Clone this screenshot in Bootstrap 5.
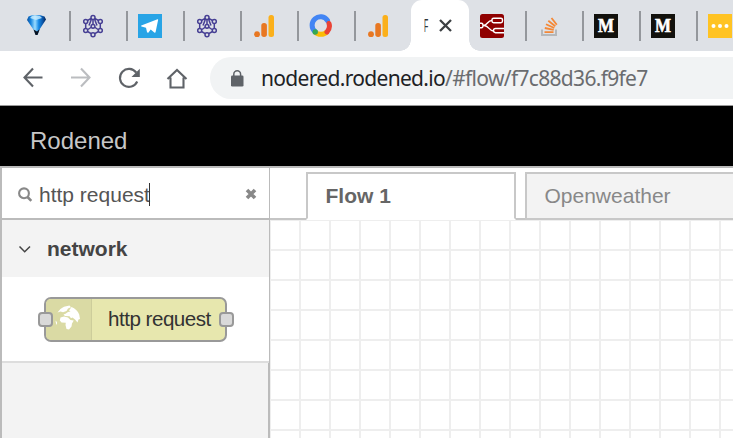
<!DOCTYPE html>
<html lang="en">
<head>
<meta charset="utf-8">
<title>Rodened</title>
<link href="https://cdn.jsdelivr.net/npm/bootstrap@5.3.0/dist/css/bootstrap.min.css" rel="stylesheet">
<style>
html,body{height:100%;overflow:hidden}
body{font-family:"Liberation Sans",Arial,sans-serif;font-size:21px;line-height:30px;color:#555;background:#fff}
svg{display:block;flex:none}
.tabstrip{height:51px;background:#dee1e6;padding-left:24px}
.fav{width:24px;height:24px;flex:none}
.divider{width:2px;height:30px;margin:0 10px 0 21px;background:#94979c;flex:none}
.active-tab{width:58px;height:51px;background:#fff;border-radius:11px 11px 0 0;margin:0 11px 0 21px;padding-left:13px;flex:none}
.active-tab::before,.active-tab::after{content:"";position:absolute;bottom:0;width:11px;height:11px}
.active-tab::before{left:-11px;background:radial-gradient(circle at 0 0,transparent 10.5px,#fff 11px)}
.active-tab::after{right:-11px;background:radial-gradient(circle at 100% 0,transparent 10.5px,#fff 11px)}
.tab-title{width:11px;font-size:17.5px;color:#33373b;line-height:24px;transform:scaleX(.4);transform-origin:0 50%}
.close-tab{margin-right:17px}
.toolbar{height:55px;border-bottom:1px solid #999;padding-left:20px}
.omnibox{height:42px;background:#f1f3f4;border-radius:21px 0 0 21px;margin-left:20px;padding-left:20px}
.url{font-family:"Noto Sans","Open Sans",sans-serif;font-size:21px;letter-spacing:-.68px;color:#6a6c6f;margin-left:16px;padding-bottom:1px}
.url b{font-weight:400;color:#202124}
.app-header{height:60px;background:#000;color:#c7c7c7;font-size:24px;padding:9px 0 0 30px}
.workspace{height:272px;border-top:2px solid #bbb}
.palette{width:270px;border-left:2px solid #bbb;border-right:1px solid #bbb;background:#f3f3f3;flex:none}
.search{height:52px;border-bottom:2px solid #bbb;background:#fff;padding:3px 12px 0 15px}
.caret{width:1px;height:23px;margin-left:-1px;background:#333}
.category{height:57px;color:#444;padding:1px 0 0 16px}
.category-name{margin-left:16px}
.nodes{height:86px;border-bottom:2px solid #ddd;background:#fff;padding:20px 0 0 42px}
.filler{border-right:1px solid #bbb}
.node{width:183px;height:45px;border:2px solid #999;border-radius:7px;background:#e7e7ae;color:#333}
.node-icon{width:46px;background:#dadaa4;border-right:1px solid #cdcd9b;border-radius:5px 0 0 5px;padding-left:8px}
.node-label{font-size:20.6px;letter-spacing:-.5px;margin-left:16px;padding-bottom:1px}
.port{width:15px;height:15px;border:2px solid #999;border-radius:4px;background:#d9d9d9;top:13px}
.port-in{left:-8px}.port-out{right:-9px}
.flow-tabs{height:52px;padding-top:4px;padding-left:36px;background:linear-gradient(#c5c5c5,#c5c5c5) bottom/100% 2px no-repeat}
.flow-tab{width:210px;height:48px;border:2px solid #c8c8c8;padding:0 0 0 17.5px;margin-right:9px;flex:none}
.flow-tab.current{background:#fff;border-bottom-color:#fff;color:#666}
.flow-tab.other{background:#f3f3f3;color:#888}
.grid-canvas{background-color:#fff;background-image:linear-gradient(90deg,#eee 2px,transparent 2px),linear-gradient(#eee 2px,transparent 2px);background-size:30px 30px;background-position:-1px -1px}
</style>
<script src="https://cdn.jsdelivr.net/npm/bootstrap@5.3.0/dist/js/bootstrap.bundle.min.js"></script>
</head>
<body class="d-flex flex-column">
<svg width="0" height="0" class="position-absolute">
<defs>
<linearGradient id="gem"><stop offset="0" stop-color="#0b4f9e"/><stop offset=".2" stop-color="#1685df"/><stop offset=".42" stop-color="#9adcff"/><stop offset=".62" stop-color="#1488e6"/><stop offset=".85" stop-color="#0a4fa0"/><stop offset="1" stop-color="#04224f"/></linearGradient>
<symbol id="graph" viewBox="0 0 24 24"><g fill="none" stroke="#463f94" stroke-width="1.5"><path d="M12 3.300 19.300 7.500V16.500L12 20.700 4.700 16.500V7.500ZM12 4V11M12 12 7 15.500M12 12 17 15.500M10.500 5 8 11.500M13.500 5 16 11.500"/><g fill="#dee1e6"><circle cx="12" cy="3.500" r="2"/><circle cx="19.300" cy="7.500" r="2"/><circle cx="19.300" cy="16.500" r="2"/><circle cx="12" cy="20.700" r="2"/><circle cx="4.700" cy="16.500" r="2"/><circle cx="4.700" cy="7.500" r="2"/><circle cx="12" cy="12.300" r="1.900"/></g></g></symbol>
<symbol id="bars" viewBox="0 0 24 24"><rect x="16.500" y="1" width="5.500" height="22" rx="2.500" fill="#fbb01b"/><rect x="9.300" y="9" width="5.600" height="14" rx="2.700" fill="#e87722"/><circle cx="5" cy="20.200" r="2.900" fill="#e87722"/></symbol>
<symbol id="medium" viewBox="0 0 24 24"><path fill="#12110d" d="M0 0h24v24H0z"/><text x="12" y="17.500" text-anchor="middle" textLength="16" lengthAdjust="spacingAndGlyphs" font-family="Liberation Serif,serif" font-weight="bold" font-size="18" fill="#fff" stroke="#fff" stroke-width=".6">M</text></symbol>
</defs>
</svg>

<div class="tabstrip d-flex align-items-center">
  <svg class="fav" viewBox="0 0 24 24"><path d="M4.500 2.500 8 1.300H16.500L20.500 2.500 22 5.500 15.500 15.500 13.500 21H11.500L10 16.500 3 6Z" fill="url(#gem)"/><path d="M8 2H16L18 4 12 6 6 4Z" fill="#c9eeff" opacity=".8"/><path d="M9.500 15.500 13 17.500 15.800 15 13.500 21H11.500Z" fill="#07101f"/></svg>
  <span class="divider"></span>
  <svg class="fav"><use href="#graph"/></svg><span class="divider"></span>
  <svg class="fav" viewBox="0 0 24 24"><path fill="#28a4e6" d="M0 0h24v24H0z"/><path fill="#fff" d="M3.300 11.500 19.500 5.200C20 5 20.200 5.400 20.100 6L17.600 18C17.400 18.800 16.900 18.800 16.300 18.400L12.700 15.600 10.500 18.500C10 19 9.200 18.700 9 18L8 13.800 3.400 12.400Q2.800 12 3.300 11.500Z"/></svg><span class="divider"></span>
  <svg class="fav"><use href="#graph"/></svg><span class="divider"></span>
  <svg class="fav"><use href="#bars"/></svg><span class="divider"></span>
  <svg class="fav" viewBox="0 0 24 24" fill="none" stroke-width="5"><path stroke="#fbbc05" d="M5.800 17.700A8.400 8.400 0 0 0 18 17.700"/><path stroke="#4285f4" stroke-linecap="round" d="M6 17.500A8.400 8.400 0 1 1 18.500 6.500"/><path stroke="#ea4335" stroke-linecap="round" d="M20 9.500A8.400 8.400 0 0 1 18 17.900"/><circle cx="6.200" cy="18" r="2.700" fill="#34a853"/></svg><span class="divider"></span>
  <svg class="fav"><use href="#bars"/></svg>
  <div class="active-tab position-relative d-flex align-items-center">
    <span class="tab-title">F</span>
    <svg class="close-tab ms-auto" width="13" height="13" viewBox="0 0 13 13"><path d="M1 1 12 12M12 1 1 12" stroke="#3c4043" stroke-width="2.300"/></svg>
  </div>
  <svg class="fav" viewBox="0 0 24 24"><rect width="24" height="24" rx="2.500" fill="#8f0000"/><g fill="none" stroke="#fff" stroke-width="1.400"><path d="M3 11.500C8 11.500 7 6.500 12 6.500M4 11.500C9 11.500 9 17 13.500 17"/><rect x="12" y="4.200" width="10.500" height="4.500" rx="1.600"/><path d="M24 14.500H15.500Q13.500 14.500 13.500 16.500T15.500 18.700H24M0 9.300H1.500Q3 9.300 3 11.500T1.500 13.700H0"/></g></svg><span class="divider"></span>
  <svg class="fav" viewBox="0 0 24 24" fill="none"><path d="M5 15.500V21H19V15.500" stroke="#b5b8bb" stroke-width="2"/><g stroke="#f48837" stroke-width="1.800"><path d="M7.500 18.200H16.500M7.800 14 16.700 15.900M9 10.200 17.300 14M11.300 6.800 18.300 12.300M14.500 4 19.800 10.800"/></g></svg><span class="divider"></span>
  <svg class="fav"><use href="#medium"/></svg><span class="divider"></span>
  <svg class="fav"><use href="#medium"/></svg><span class="divider"></span>
  <svg class="fav" viewBox="0 0 24 24"><path fill="#ffc323" d="M0 0h24v24H0z"/><g fill="#fff"><circle cx="5.500" cy="12" r="2"/><circle cx="12" cy="12" r="2"/><circle cx="18.500" cy="12" r="2"/></g></svg>
</div>

<div class="toolbar d-flex align-items-center">
  <svg width="170" height="28" viewBox="20 63 170 28" fill="none" stroke="#5f6368" stroke-width="2.100"><path d="M42.500 76.500H24.500M33 67.500 24.500 76.500 33 85.500"/><path stroke="#bbbdc0" d="M71 76.500H89.500M81 67.500 89.500 76.500 81 85.500"/><path d="M136.200 71.500A9 9 0 1 0 137.200 80.500"/><path fill="#5f6368" stroke="none" d="M139.800 67.800V76H131.500Z"/><path d="M167.500 78 177 69 186.500 78M170.500 76.500V86.500H183.500V76.500"/></svg>
  <div class="omnibox d-flex align-items-center flex-grow-1">
    <svg width="15" height="18" viewBox="0 0 15 18"><rect x="1" y="6.500" width="12.500" height="11" rx="1.300" fill="#5f6368"/><path d="M3.800 7.500V5.200a3.400 3.400 0 0 1 6.800 0V7.500" fill="none" stroke="#5f6368" stroke-width="1.500"/></svg>
    <span class="url text-nowrap"><b>nodered.rodened.io</b>/#flow/f7c88d36.f9fe7</span>
  </div>
</div>

<header class="app-header d-flex align-items-center">Rodened</header>

<main class="workspace d-flex">
  <aside class="palette d-flex flex-column">
    <div class="search d-flex align-items-center">
      <svg width="18" height="18" viewBox="0 0 18 18" fill="none" stroke="#888"><circle cx="7" cy="7.300" r="4.900" stroke-width="2.100"/><path d="M10.500 11 14.300 14.800" stroke-width="2.600"/></svg>
      <span class="ms-1">http request</span><span class="caret"></span>
      <svg class="ms-auto" width="12" height="14" viewBox="0 0 12 14"><path d="M2 2 10 10M10 2 2 10" stroke="#888" stroke-width="3.600"/></svg>
    </div>
    <div class="category d-flex align-items-center fw-bold">
      <svg width="13" height="9" viewBox="0 0 13 9"><path d="M1.500 1.500 6.700 6.800 12 1.500" fill="none" stroke="#444" stroke-width="1.500"/></svg>
      <span class="category-name">network</span>
    </div>
    <div class="nodes">
      <div class="node position-relative d-flex">
        <div class="node-icon d-flex align-items-center">
          <svg width="28" height="31" viewBox="0 0 28 31" fill="#fff"><path d="M3.500 8.500Q6 4.500 10 2.800L15.500 1.600 17 3.200 14 4.500 12.500 7 9 8.200 6.500 7.500ZM17.500 3Q23 5 25.200 10.500L26 15 24.500 15.500 23.500 18.500 21 15.500 18.500 13.500 17 14.200 15.500 12.300 11 12 9.500 10.500 11.500 9.800 14 8 16.500 7.500 15 6.500ZM6.500 13.500 10 12.500 14 13.500 16.500 16 19.800 16.500 18 19.500 17.500 22.500 15 25.500 12.500 25 11.500 21 11.800 18.800 7.500 18.500 5.800 16.500ZM1.500 16.500 3 18 3 21 2 19.500Z"/></svg>
        </div>
        <span class="node-label align-self-center text-nowrap">http request</span>
        <span class="port port-in position-absolute"></span>
        <span class="port port-out position-absolute"></span>
      </div>
    </div>
    <div class="filler flex-grow-1"></div>
  </aside>
  <section class="flex-grow-1 d-flex flex-column overflow-hidden">
    <div class="flow-tabs d-flex">
      <div class="flow-tab current d-flex align-items-center fw-bold">Flow 1</div>
      <div class="flow-tab other d-flex align-items-center">Openweather</div>
    </div>
    <div class="grid-canvas flex-grow-1"></div>
  </section>
</main>
</body>
</html>
